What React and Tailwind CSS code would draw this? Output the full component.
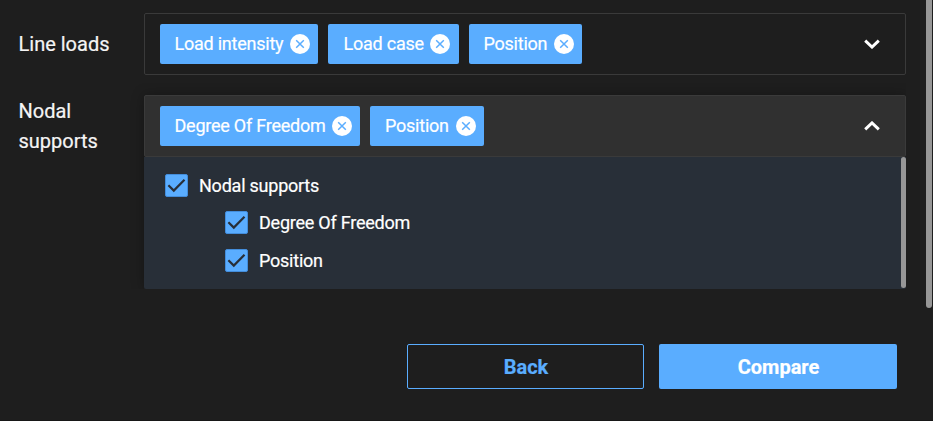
import React from "react";

function Chip({ label, width, pad }) {
  return (
    <div className={`flex h-10 shrink-0 items-center justify-between rounded-[2px] bg-[#5aadff] text-white ${pad || "pl-[14.5px] pr-2"} ${width}`}>
      <span className="whitespace-nowrap text-[18px] leading-6 tracking-[-0.23px]">{label}</span>
      <svg viewBox="0 0 20 20" className="-mt-px h-5 w-5 shrink-0">
        <circle cx="10" cy="10" r="10" fill="#fff" />
        <path d="M6.2 6.2l7.6 7.6M13.8 6.2l-7.6 7.6" stroke="#5aadff" strokeWidth="1.5" fill="none" />
      </svg>
    </div>
  );
}

function Chevron({ up }) {
  return (
    <svg viewBox="0 0 16 10" className="ml-auto h-[10px] w-4" fill="none" stroke="#fff" strokeWidth="2.9">
      <path d={up ? "M1.2 8.4L8 1.9l6.8 6.5" : "M1.2 1.6L8 8.1l6.8-6.5"} />
    </svg>
  );
}

function Check({ label }) {
  return (
    <div className="flex items-start">
      <svg viewBox="0 0 23 23" className="h-[23px] w-[23px] shrink-0">
        <rect x="0.5" y="0.5" width="22" height="22" rx="1.5" fill="#5aadff" stroke="#438ddb" />
        <path d="M3.4 11.2l5.4 5.4L19.5 5.8" fill="none" stroke="#282f38" strokeWidth="2.2" />
      </svg>
      <span className="ml-[11px] text-[18px] leading-6 tracking-[-0.23px] text-white">{label}</span>
    </div>
  );
}

export default function App() {
  return (
    <div className="flex h-[421px] w-[933px] overflow-hidden border-b border-[#171717] bg-[#1e1e1e] font-['Roboto','Liberation_Sans',sans-serif] text-white [-webkit-text-stroke:0.2px]">
      <div className="flex w-[926px] shrink-0 flex-col pl-[18px] pr-5 pt-[13px]">
        <div className="flex h-[62px] items-center">
          <div className="w-[126px] shrink-0 pl-[0.5px] text-[20px] leading-[30px] text-[#f5f5f5]">Line loads</div>
          <div className="flex h-[62px] flex-1 items-center gap-[10px] rounded-[2px] border border-[#3a3a3a] pl-[15px] pr-[25px]">
            <Chip label="Load intensity" width="w-[158px]" />
            <Chip label="Load case" width="w-[131px]" pad="pl-[15.5px] pr-[9px]" />
            <Chip label="Position" width="w-[113px]" />
            <Chevron />
          </div>
        </div>
        <div className="mt-5 flex">
          <div className="w-[126px] shrink-0 pl-[0.5px] pt-px text-[20px] leading-[30px] text-[#f5f5f5]">
            Nodal
            <br />
            supports
          </div>
          <div className="flex-1 shadow-[0_0_12px_rgba(0,0,0,0.3)] [clip-path:inset(-12px_0_0_-14px)]">
            <div className="flex h-[62px] items-center gap-[10px] rounded-[2px] border border-[#3a3a3a] bg-[#303030] pl-[15px] pr-[25px]">
              <Chip label="Degree Of Freedom" width="w-[200px]" pad="pl-[14.5px] pr-[8.5px]" />
              <Chip label="Position" width="w-[114px]" pad="pl-[15px] pr-[8.5px]" />
              <Chevron up />
            </div>
            <div className="flex h-[132px] justify-between rounded-b-[2px] bg-[#282f38]">
              <div className="flex flex-col gap-[13px] pl-[21px] pt-[17px]">
                <Check label="Nodal supports" />
                <div className="flex flex-col gap-[14px] pl-[60px]">
                  <Check label="Degree Of Freedom" />
                  <Check label="Position" />
                </div>
              </div>
              <div className="h-[131px] w-[5px] rounded-full bg-[#979797]" />
            </div>
          </div>
        </div>
        <div className="mt-[55px] flex justify-end gap-[15px] pr-[9px]">
          <button className="h-[45px] w-[237px] rounded-[2px] border border-[#5aadff] pl-px text-[20px] font-bold leading-6 text-[#5aadff]">Back</button>
          <button className="h-[45px] w-[238px] rounded-[2px] bg-[#5aadff] pl-px text-[20px] font-bold leading-6 text-white">Compare</button>
        </div>
      </div>
      <div className="h-[308px] w-[6px] shrink-0 rounded-b-full bg-[#979797]" />
    </div>
  );
}
